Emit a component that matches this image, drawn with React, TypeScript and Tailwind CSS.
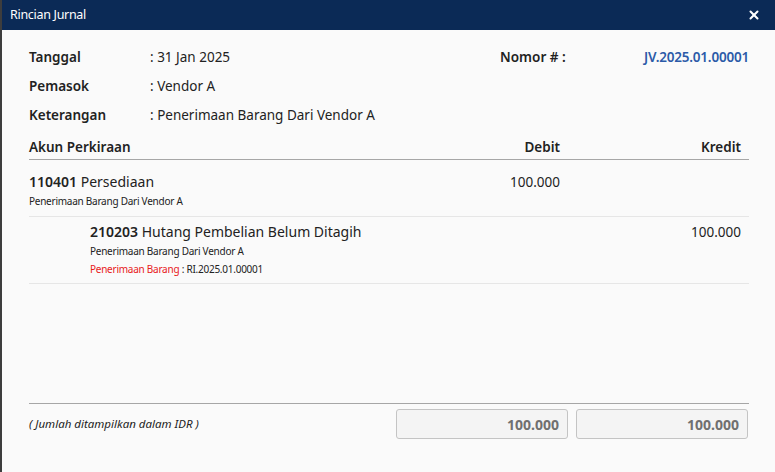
import { X } from "lucide-react";

const font = { fontFamily: '"Noto Sans", "Open Sans", sans-serif' };

export default function App() {
  return (
    <div className="h-[472px] w-[775px] bg-[#3d3d3d] pl-[2px] text-[#222]" style={font}>
      <div className="flex h-full flex-col bg-[#fafafa]">
        <header className="flex h-[30px] items-center justify-between bg-[#0b2a56] pl-2 pr-[14px] text-white">
          <span className="text-[12.5px] tracking-[-0.3px]">Rincian Jurnal</span>
          <X size={14} strokeWidth={3.5} />
        </header>

        <div className="flex flex-1 flex-col pl-[27px] pr-[26px] pt-[17px]">
          <div className="flex justify-between text-[13.5px]">
            <div className="flex flex-col gap-[8px]">
              <div className="flex h-[21px] items-center">
                <span className="w-[121px] font-semibold">Tanggal</span>
                <span>: 31 Jan 2025</span>
              </div>
              <div className="flex h-[21px] items-center">
                <span className="w-[121px] font-semibold">Pemasok</span>
                <span>: Vendor A</span>
              </div>
              <div className="flex h-[21px] items-center">
                <span className="w-[121px] font-semibold">Keterangan</span>
                <span>: Penerimaan Barang Dari Vendor A</span>
              </div>
            </div>
            <div className="flex h-[21px] items-center">
              <span className="w-[144px] font-semibold">Nomor # :</span>
              <span className="font-semibold tracking-[-0.2px] text-[#2b5aa8]">JV.2025.01.00001</span>
            </div>
          </div>

          <div className="mt-[9px] flex h-[25px] items-center border-b border-[#a6a6a6] text-[13.5px] font-semibold">
            <span className="flex-1">Akun Perkiraan</span>
            <span className="w-[180px] pr-2 text-right">Debit</span>
            <span className="w-[181px] pr-2 text-right">Kredit</span>
          </div>

          <div className="flex border-b border-[#e6e6e6] pb-[8px] pt-[11px]">
            <div className="flex-1">
              <div className="text-[14px] leading-[22px]">
                <span className="font-semibold">110401</span> Persediaan
              </div>
              <div className="mt-[1px] text-[10px] leading-[14px] tracking-[-0.25px]">Penerimaan Barang Dari Vendor A</div>
            </div>
            <div className="w-[180px] pr-2 text-right text-[13.5px] leading-[22px]">100.000</div>
            <div className="w-[181px]" />
          </div>

          <div className="flex border-b border-[#e6e6e6] pb-[7px] pt-[4px]">
            <div className="flex-1 pl-[61px]">
              <div className="text-[14px] leading-[22px]">
                <span className="font-semibold">210203</span> Hutang Pembelian Belum Ditagih
              </div>
              <div className="mt-[1px] text-[10px] leading-[14px] tracking-[-0.25px]">Penerimaan Barang Dari Vendor A</div>
              <div className="mt-[4px] text-[10px] leading-[14px] tracking-[-0.25px]">
                <span className="text-[#e8201a]">Penerimaan Barang</span> : RI.2025.01.00001
              </div>
            </div>
            <div className="w-[180px]" />
            <div className="w-[181px] pr-2 text-right text-[13.5px] leading-[22px]">100.000</div>
          </div>

          <div className="flex-1" />

          <div className="mb-[33px] flex items-center border-t border-[#a6a6a6] pt-[5px]">
            <span className="flex-1 text-[11.5px] italic">( Jumlah ditampilkan dalam IDR )</span>
            <div className="flex h-[30px] w-[172px] items-center justify-end rounded-[3px] border border-[#c4c4c4] bg-[#f4f4f4] pr-[8px] text-[14px] font-bold text-[#707070]">
              100.000
            </div>
            <div className="ml-[8px] mr-px flex h-[30px] w-[172px] items-center justify-end rounded-[3px] border border-[#c4c4c4] bg-[#f4f4f4] pr-[8px] text-[14px] font-bold text-[#707070]">
              100.000
            </div>
          </div>
        </div>
      </div>
    </div>
  );
}
